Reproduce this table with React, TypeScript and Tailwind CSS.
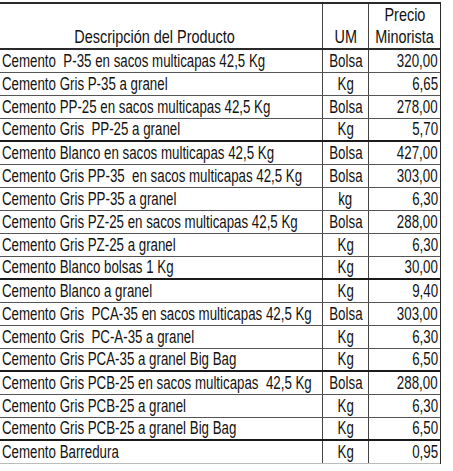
const rows: { d: string; um: string; p: string; thick?: boolean }[] = [
  { d: "Cemento  P-35 en sacos multicapas 42,5 Kg", um: "Bolsa", p: "320,00" },
  { d: "Cemento Gris P-35 a granel", um: "Kg", p: "6,65" },
  { d: "Cemento PP-25 en sacos multicapas 42,5 Kg", um: "Bolsa", p: "278,00" },
  { d: "Cemento Gris  PP-25 a granel", um: "Kg", p: "5,70", thick: true },
  { d: "Cemento Blanco en sacos multicapas 42,5 Kg", um: "Bolsa", p: "427,00" },
  { d: "Cemento Gris PP-35  en sacos multicapas 42,5 Kg", um: "Bolsa", p: "303,00" },
  { d: "Cemento Gris PP-35 a granel", um: "kg", p: "6,30" },
  { d: "Cemento Gris PZ-25 en sacos multicapas 42,5 Kg", um: "Bolsa", p: "288,00" },
  { d: "Cemento Gris PZ-25 a granel", um: "Kg", p: "6,30" },
  { d: "Cemento Blanco bolsas 1 Kg", um: "Kg", p: "30,00", thick: true },
  { d: "Cemento Blanco a granel", um: "Kg", p: "9,40" },
  { d: "Cemento Gris  PCA-35 en sacos multicapas 42,5 Kg", um: "Bolsa", p: "303,00" },
  { d: "Cemento Gris  PC-A-35 a granel", um: "Kg", p: "6,30" },
  { d: "Cemento Gris PCA-35 a granel Big Bag", um: "Kg", p: "6,50", thick: true },
  { d: "Cemento Gris PCB-25 en sacos multicapas  42,5 Kg", um: "Bolsa", p: "288,00" },
  { d: "Cemento Gris PCB-25 a granel", um: "Kg", p: "6,30" },
  { d: "Cemento Gris PCB-25 a granel Big Bag", um: "Kg", p: "6,50", thick: true },
  { d: "Cemento Barredura", um: "Kg", p: "0,95" },
];

// Arial Narrow look: Liberation Sans squeezed horizontally
const narrow = "inline-block whitespace-pre scale-x-[0.76]";

export default function App() {
  return (
    <div
      className="w-[453px] h-[471px] bg-white pt-[2px] text-[#121212] text-[17.5px] leading-none"
      style={{ fontFamily: '"Liberation Sans", Arial, sans-serif' }}
    >
      <div className="w-[441px] border-t-2 border-r border-[#2a2a2a]">
        {/* header */}
        <div className="grid grid-cols-[323px_46px_71px] h-[46px] border-b-2 border-[#2a2a2a] text-[19px]">
          <div className="border-r border-[#444] flex items-end justify-center pb-[2px] pr-[12px]">
            <span className={narrow + " origin-center"}>Descripción del Producto</span>
          </div>
          <div className="border-r border-[#444] flex items-end justify-center pb-[2px]">
            <span className={narrow + " origin-center"}>UM</span>
          </div>
          <div className="flex flex-col items-center justify-end pb-[2px] gap-[3px]">
            <span className={narrow + " origin-center"}>Precio</span>
            <span className={narrow + " origin-center"}>Minorista</span>
          </div>
        </div>

        {rows.map((r, i) => (
          <div
            key={i}
            className={
              "grid grid-cols-[323px_46px_71px] h-[23px] " +
              (i === rows.length - 1
                ? "border-b border-[#bbb]"
                : r.thick
                  ? "border-b-2 border-[#1a1a1a]"
                  : "border-b border-[#555]")
            }
          >
            <div className="border-r border-[#444] flex items-end pl-[2px] pb-[2px] overflow-hidden">
              <span className={narrow + " origin-left"}>{r.d}</span>
            </div>
            <div className="border-r border-[#444] flex items-end justify-center pb-[2px]">
              <span className={narrow + " origin-center"}>{r.um}</span>
            </div>
            <div className="flex items-end justify-end pr-[2px] pb-[2px]">
              <span className={narrow + " origin-right"}>{r.p}</span>
            </div>
          </div>
        ))}
      </div>
    </div>
  );
}
